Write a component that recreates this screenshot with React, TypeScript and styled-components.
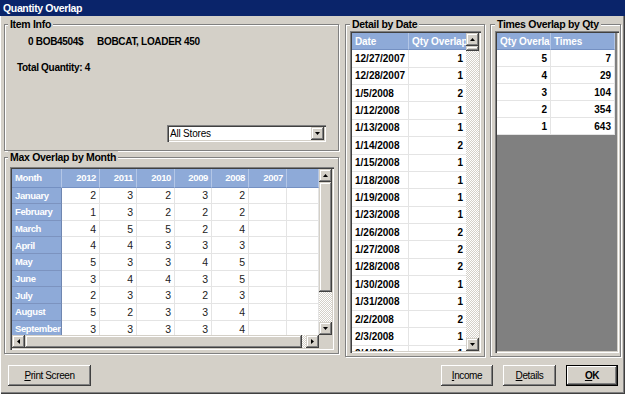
import React from "react";
import styled, { createGlobalStyle } from "styled-components";

const FONT = `"Liberation Sans", Arial, Helvetica, sans-serif`;

const GlobalStyle = createGlobalStyle`
  *, *::before, *::after { box-sizing: border-box; }
  html, body { margin: 0; padding: 0; background: #d4d0c8; }
  body { font-family: ${FONT}; }
`;

/* ---------- window chrome ---------- */

const Window = styled.div`
  width: 625px;
  height: 394px;
  display: flex;
  flex-direction: column;
  background: #d4d0c8;
  overflow: hidden;
  font-family: ${FONT};
  color: #000;
`;

const TitleBar = styled.div`
  flex: none;
  height: 16px;
  padding-left: 3px;
  display: flex;
  align-items: center;
  background: #0a246a;
  color: #fff;
  font-size: 10.5px;
  font-weight: bold;
  letter-spacing: -0.35px;
`;

const Client = styled.div`
  flex: 1;
  display: flex;
  flex-direction: column;
  box-shadow: inset 1px 0 #ffffff, inset -1px -1px #404040, inset -2px -2px #808080;
`;

const Main = styled.div`
  flex: none;
  height: 341px;
  display: flex;
  align-items: flex-start;
  padding: 2px 0 0 4px;
`;

const LeftColumn = styled.div`
  flex: none;
  display: flex;
  flex-direction: column;
  width: 336px;
`;

/* ---------- group boxes ---------- */

const Group = styled.fieldset<{ $w: number; $h: number; $ml?: number }>`
  flex: none;
  margin: 0 0 0 ${(p) => p.$ml ?? 0}px;
  padding: 0;
  min-width: 0;
  width: ${(p) => p.$w}px;
  height: ${(p) => p.$h}px;
  border: 1px solid #808080;
  box-shadow: 1px 1px 0 #ffffff, inset 1px 1px 0 #ffffff;
`;

const Caption = styled.legend<{ $ml: number }>`
  margin-left: ${(p) => p.$ml}px;
  padding: 0 2px;
  background: #d4d0c8;
  font-size: 10.5px;
  font-weight: bold;
  line-height: 12px;
  letter-spacing: -0.3px;
  white-space: nowrap;
`;

const GroupBody = styled.div<{ $pl: number; $pt: number }>`
  padding: ${(p) => p.$pt}px 0 0 ${(p) => p.$pl}px;
`;

/* ---------- item info ---------- */

const InfoBody = styled.div`
  display: flex;
  flex-direction: column;
  padding-top: 6px;
`;

const InfoLine = styled.div<{ $indent: number; $mt?: number }>`
  display: flex;
  padding-left: ${(p) => p.$indent}px;
  margin-top: ${(p) => p.$mt ?? 0}px;
  font-size: 10px;
  font-weight: bold;
  line-height: 12px;
  letter-spacing: -0.3px;
  white-space: nowrap;
`;

const PartCode = styled.span`
  flex: none;
  width: 69px;
`;

const StoreRow = styled.div`
  margin: 51px 0 0 162px;
`;

const Select = styled.div`
  width: 159px;
  height: 17px;
  display: flex;
  align-items: center;
  padding: 2px;
  background: #fff;
  box-shadow: inset 1px 1px #808080, inset 2px 2px #404040, inset -1px -1px #ffffff,
    inset -2px -2px #d4d0c8;
  font-size: 10px;
  letter-spacing: -0.2px;
`;

const SelectValue = styled.span`
  flex: 1;
  padding-left: 1px;
`;

/* ---------- grids ---------- */

const GridFrame = styled.div<{ $w: number; $h: number; $cols: string; $rows: string }>`
  width: ${(p) => p.$w}px;
  height: ${(p) => p.$h}px;
  padding: 2px;
  display: grid;
  grid-template-columns: ${(p) => p.$cols};
  grid-template-rows: ${(p) => p.$rows};
  box-shadow: inset 1px 1px #808080, inset 2px 2px #404040, inset -1px -1px #ffffff,
    inset -2px -2px #d4d0c8;
`;

const Viewport = styled.div<{ $cols: string; $header: number; $row: number; $bg?: string }>`
  min-width: 0;
  min-height: 0;
  overflow: hidden;
  display: grid;
  grid-template-columns: ${(p) => p.$cols};
  grid-template-rows: ${(p) => p.$header}px;
  grid-auto-rows: ${(p) => p.$row}px;
  align-content: start;
  background: ${(p) => p.$bg ?? "#ffffff"};
`;

const HeadCell = styled.div<{ $align?: "left" | "right"; $size?: number }>`
  display: flex;
  align-items: center;
  justify-content: ${(p) => (p.$align === "right" ? "flex-end" : "flex-start")};
  padding: 0 3px;
  overflow: hidden;
  white-space: nowrap;
  background: #8eaad8;
  color: #fff;
  font-size: ${(p) => p.$size ?? 10}px;
  font-weight: bold;
  letter-spacing: ${(p) => ((p.$size ?? 10) < 10 ? -0.35 : -0.1)}px;
  border-right: 1px solid #b3c6e6;
  border-bottom: 1px solid #7490c2;
`;

const RowHead = styled.div`
  display: flex;
  align-items: center;
  padding: 0 3px;
  overflow: hidden;
  white-space: nowrap;
  background: #8eaad8;
  color: #fff;
  font-size: 9.5px;
  font-weight: bold;
  letter-spacing: -0.4px;
  border-right: 1px solid #6f86b0;
  border-bottom: 1px solid #7c93bf;
`;

const Cell = styled.div<{ $align?: "left" | "right"; $bold?: boolean }>`
  display: flex;
  align-items: center;
  justify-content: ${(p) => (p.$align === "left" ? "flex-start" : "flex-end")};
  padding: 0 3px;
  overflow: hidden;
  white-space: nowrap;
  background: #fff;
  color: ${(p) => (p.$bold ? "#000" : "#222")};
  font-size: ${(p) => (p.$bold ? 10 : 10.5)}px;
  font-weight: ${(p) => (p.$bold ? "bold" : "normal")};
  border-right: 1px solid #e4e4e4;
  border-bottom: 1px solid #e4e4e4;
`;

/* ---------- scrollbars ---------- */

const VScroll = styled.div`
  min-height: 0;
  display: flex;
  flex-direction: column;
`;

const HScroll = styled.div`
  min-width: 0;
  display: flex;
`;

const ScrollPart = styled.div<{ $w?: number; $h?: number }>`
  flex: none;
  width: ${(p) => (p.$w ? `${p.$w}px` : "auto")};
  height: ${(p) => (p.$h ? `${p.$h}px` : "auto")};
  display: flex;
  align-items: center;
  justify-content: center;
  background: #d4d0c8;
  box-shadow: inset -1px -1px #404040, inset 1px 1px #d4d0c8, inset -2px -2px #808080,
    inset 2px 2px #ffffff;
`;

const Track = styled.div`
  flex: 1;
  background: conic-gradient(#ffffff 25%, #d4d0c8 0 50%, #ffffff 0 75%, #d4d0c8 0) 0 0 / 2px 2px;
`;

const Corner = styled.div`
  background: #d4d0c8;
`;

type Dir = "up" | "down" | "left" | "right";
const ARROWS: Record<Dir, { w: number; h: number; pts: string }> = {
  up: { w: 5, h: 3, pts: "0,3 2.5,0 5,3" },
  down: { w: 5, h: 3, pts: "0,0 5,0 2.5,3" },
  left: { w: 3, h: 5, pts: "3,0 3,5 0,2.5" },
  right: { w: 3, h: 5, pts: "0,0 3,2.5 0,5" },
};

const Arrow = ({ dir }: { dir: Dir }) => {
  const a = ARROWS[dir];
  return (
    <svg width={a.w} height={a.h} viewBox={`0 0 ${a.w} ${a.h}`}>
      <polygon points={a.pts} fill="#000" />
    </svg>
  );
};

/* ---------- footer ---------- */

const Footer = styled.div`
  flex: 1;
  display: flex;
  align-items: flex-start;
  padding: 8px 7px 0 8px;
`;

const RightButtons = styled.div`
  margin-left: auto;
  display: flex;
  gap: 10px;
`;

const Button = styled.button<{ $w: number; $default?: boolean }>`
  width: ${(p) => p.$w}px;
  height: 21px;
  margin: 0;
  padding: 0;
  font-family: ${FONT};
  font-size: 10px;
  letter-spacing: -0.4px;
  font-weight: ${(p) => (p.$default ? "bold" : "normal")};
  color: #000;
  background: #d4d0c8;
  border: ${(p) => (p.$default ? "1px solid #000" : "none")};
  box-shadow: inset -1px -1px #404040, inset 1px 1px #ffffff, inset -2px -2px #808080,
    inset 2px 2px #d4d0c8;
`;

/* ---------- data ---------- */

const YEARS = ["2012", "2011", "2010", "2009", "2008", "2007", ""];
const MONTHS: [string, (number | null)[]][] = [
  ["January", [2, 3, 2, 3, 2, null, null]],
  ["February", [1, 3, 2, 2, 2, null, null]],
  ["March", [4, 5, 5, 2, 4, null, null]],
  ["April", [4, 4, 3, 3, 3, null, null]],
  ["May", [5, 3, 3, 4, 5, null, null]],
  ["June", [3, 4, 4, 3, 5, null, null]],
  ["July", [2, 3, 3, 2, 3, null, null]],
  ["August", [5, 2, 3, 3, 4, null, null]],
  ["September", [3, 3, 3, 3, 4, null, null]],
];

const DETAIL: [string, number][] = [
  ["12/27/2007", 1],
  ["12/28/2007", 1],
  ["1/5/2008", 2],
  ["1/12/2008", 1],
  ["1/13/2008", 1],
  ["1/14/2008", 2],
  ["1/15/2008", 1],
  ["1/18/2008", 1],
  ["1/19/2008", 1],
  ["1/23/2008", 1],
  ["1/26/2008", 2],
  ["1/27/2008", 2],
  ["1/28/2008", 2],
  ["1/30/2008", 1],
  ["1/31/2008", 1],
  ["2/2/2008", 2],
  ["2/3/2008", 1],
  ["2/4/2008", 1],
];

const TIMES: [number, number][] = [
  [5, 7],
  [4, 29],
  [3, 104],
  [2, 354],
  [1, 643],
];

export default function App() {
  return (
    <>
      <GlobalStyle />
      <Window>
        <TitleBar>Quantity Overlap</TitleBar>
        <Client>
          <Main>
            <LeftColumn>
              <Group $w={335} $h={133}>
                <Caption $ml={3}>Item Info</Caption>
                <InfoBody>
                  <InfoLine $indent={23}>
                    <PartCode>0 BOB4504$</PartCode>
                    <span>BOBCAT, LOADER 450</span>
                  </InfoLine>
                  <InfoLine $indent={12} $mt={14}>
                    Total Quantity: 4
                  </InfoLine>
                  <StoreRow>
                    <Select>
                      <SelectValue>All Stores</SelectValue>
                      <ScrollPart $w={13} $h={13}>
                        <Arrow dir="down" />
                      </ScrollPart>
                    </Select>
                  </StoreRow>
                </InfoBody>
              </Group>

              <Group $w={335} $h={203}>
                <Caption $ml={3}>Max Overlap by Month</Caption>
                <GroupBody $pl={5} $pt={4}>
                  <GridFrame $w={324} $h={183} $cols="1fr 13px" $rows="1fr 13px">
                    <Viewport
                      $cols="50px 38px 37px 38px 37px 37px 38px 1fr"
                      $header={18.5}
                      $row={16.67}
                    >
                      <HeadCell $size={9.5}>Month</HeadCell>
                      {YEARS.map((y, i) => (
                        <HeadCell key={i} $align="right" $size={9.5}>
                          {y}
                        </HeadCell>
                      ))}
                      {MONTHS.map(([m, vals]) => (
                        <React.Fragment key={m}>
                          <RowHead>{m}</RowHead>
                          {vals.map((v, i) => (
                            <Cell key={i}>{v ?? ""}</Cell>
                          ))}
                        </React.Fragment>
                      ))}
                    </Viewport>
                    <VScroll>
                      <ScrollPart $h={13}>
                        <Arrow dir="up" />
                      </ScrollPart>
                      <ScrollPart $h={110} />
                      <Track />
                      <ScrollPart $h={13}>
                        <Arrow dir="down" />
                      </ScrollPart>
                    </VScroll>
                    <HScroll>
                      <ScrollPart $w={13}>
                        <Arrow dir="left" />
                      </ScrollPart>
                      <ScrollPart $w={277} />
                      <Track />
                      <ScrollPart $w={13}>
                        <Arrow dir="right" />
                      </ScrollPart>
                    </HScroll>
                    <Corner />
                  </GridFrame>
                </GroupBody>
              </Group>
            </LeftColumn>

            <Group $w={140} $h={339} $ml={5}>
              <Caption $ml={4}>Detail by Date</Caption>
              <GroupBody $pl={4} $pt={1}>
                <GridFrame $w={131} $h={322} $cols="1fr 13px" $rows="1fr">
                  <Viewport $cols="57px 58px" $header={17.3} $row={17.375}>
                    <HeadCell>Date</HeadCell>
                    <HeadCell>Qty Overlap</HeadCell>
                    {DETAIL.map(([d, q]) => (
                      <React.Fragment key={d}>
                        <Cell $align="left" $bold>
                          {d}
                        </Cell>
                        <Cell $bold>{q}</Cell>
                      </React.Fragment>
                    ))}
                  </Viewport>
                  <VScroll>
                    <ScrollPart $h={13}>
                      <Arrow dir="up" />
                    </ScrollPart>
                    <ScrollPart $h={5} />
                    <Track />
                    <ScrollPart $h={13}>
                      <Arrow dir="down" />
                    </ScrollPart>
                  </VScroll>
                </GridFrame>
              </GroupBody>
            </Group>

            <Group $w={131} $h={339} $ml={5}>
              <Caption $ml={4}>Times Overlap by Qty</Caption>
              <GroupBody $pl={4} $pt={1}>
                <GridFrame $w={124} $h={322} $cols="1fr" $rows="1fr">
                  <Viewport $cols="54px 64px" $header={17.3} $row={17} $bg="#808080">
                    <HeadCell>Qty Overlap</HeadCell>
                    <HeadCell>Times</HeadCell>
                    {TIMES.map(([q, t]) => (
                      <React.Fragment key={q}>
                        <Cell $bold>{q}</Cell>
                        <Cell $bold>{t}</Cell>
                      </React.Fragment>
                    ))}
                  </Viewport>
                </GridFrame>
              </GroupBody>
            </Group>
          </Main>

          <Footer>
            <Button $w={83}>
              <u>P</u>rint Screen
            </Button>
            <RightButtons>
              <Button $w={52}>
                <u>I</u>ncome
              </Button>
              <Button $w={53}>
                <u>D</u>etails
              </Button>
              <Button $w={52} $default>
                <u>O</u>K
              </Button>
            </RightButtons>
          </Footer>
        </Client>
      </Window>
    </>
  );
}
